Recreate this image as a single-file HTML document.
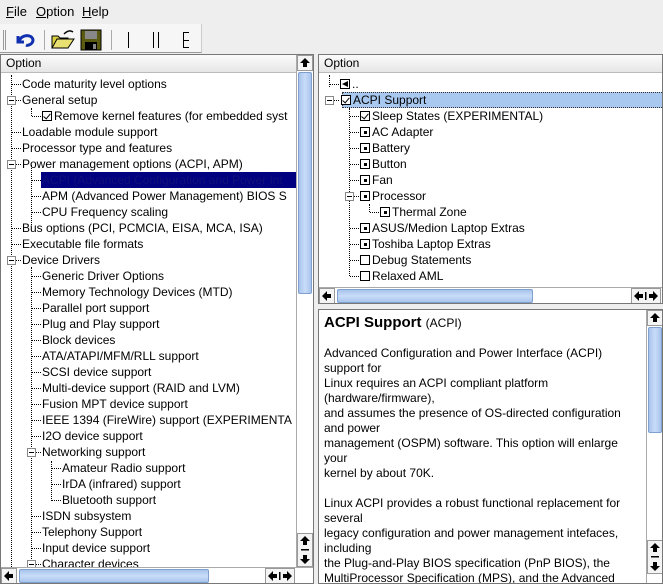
<!DOCTYPE html>
<html><head><meta charset="utf-8"><style>
*{box-sizing:border-box;margin:0;padding:0}
body{width:663px;height:584px;overflow:hidden;background:#eeeeee;font-family:"Liberation Sans",sans-serif;font-size:12px;color:#000;position:relative}
.abs{position:absolute}
.menu span{position:absolute;top:4px;font-size:13px}
.hdr{position:absolute;height:18px;background:linear-gradient(#fbfbfb,#e6e6e6);border-bottom:1px solid #bbb;padding-left:5px;line-height:17px;font-size:12px}
.row{position:absolute;height:16px;line-height:16px;white-space:nowrap}
.vl{position:absolute;border-left:1px dotted #000;width:0}
.hl{position:absolute;border-top:1px dotted #000;height:0}
.box{display:inline-block;width:10px;height:10px;border:1px solid #000;vertical-align:-1px;margin-right:2px;position:relative;background:#fff}
.ck::after{content:"";position:absolute;left:2px;top:0px;width:3px;height:6px;border:solid #000;border-width:0 1.5px 1.5px 0;transform:rotate(40deg)}
.dt::after{content:"";position:absolute;left:3px;top:3px;width:3px;height:3px;background:#000}
.pm{position:absolute;width:9px;height:9px;border:1px solid #888;background:#fff}
.pm::after{content:"";position:absolute;left:1px;top:3px;width:5px;height:1px;background:#000}
.sbv{position:absolute;width:17px;background:#fff;border-left:1px solid #aaa}
.thumb{position:absolute;left:1px;right:1px;background:linear-gradient(90deg,#a8c4ec,#c8dcf8 50%,#a8c4ec);border:1px solid #7f9fcf;border-radius:2px}
.btn{position:absolute;width:16px;height:16px;background:#f4f4f4;border:1px solid #999}
.btn svg{position:absolute;left:0;top:0}
.sbh{position:absolute;height:16px;background:#fff;border-top:1px solid #aaa}
</style></head><body>
<div class="menu">
<span style="left:6px"><u>F</u>ile</span><span style="left:36px"><u>O</u>ption</span><span style="left:82px"><u>H</u>elp</span>
</div>
<div class="abs" style="left:0;top:24px;width:202px;height:29px;background:#f6f6f6;border-bottom:1px solid #999;border-right:1px solid #ccc"></div>
<div class="abs" style="left:3px;top:30px;width:3px;height:20px;border-left:1px solid #999;border-right:1px solid #999"></div>
<svg class="abs" style="left:12px;top:30px" width="24" height="20"><path d="M6 6 L6 12 L12 12" fill="none" stroke="#1030b0" stroke-width="3"/><path d="M7 11 C10 4 20 4 21 10 C21 14 16 16 14 15" fill="none" stroke="#1030b0" stroke-width="3"/></svg>
<div class="abs" style="left:44px;top:30px;width:1px;height:20px;background:#aaa"></div>
<svg class="abs" style="left:50px;top:28px" width="26" height="22"><path d="M2 8 h6 l2 2 h8 v10 h-16z" fill="#d8d040" stroke="#000"/><path d="M2 20 l5-9 h17 l-6 9z" fill="#e8e070" stroke="#000"/><path d="M14 6 q5-5 9 -2" fill="none" stroke="#000" stroke-width="1.5"/></svg>
<svg class="abs" style="left:80px;top:29px" width="22" height="22"><rect x="1" y="1" width="20" height="20" fill="#5a5a10" stroke="#000"/><rect x="5" y="2" width="12" height="8" fill="#888"/><rect x="5" y="13" width="12" height="8" fill="#000"/><rect x="13" y="15" width="3" height="5" fill="#888"/></svg>
<div class="abs" style="left:111px;top:30px;width:1px;height:20px;background:#aaa"></div>
<div class="abs" style="left:128px;top:32px;width:1px;height:16px;background:#000"></div>
<div class="abs" style="left:153px;top:32px;width:1px;height:16px;background:#000"></div>
<div class="abs" style="left:158px;top:32px;width:1px;height:16px;background:#000"></div>
<div class="abs" style="left:183px;top:32px;width:1px;height:16px;background:#000"></div>
<div class="abs" style="left:184px;top:32px;width:5px;height:1px;background:#000"></div>
<div class="abs" style="left:184px;top:40px;width:5px;height:1px;background:#000"></div>
<div class="abs" style="left:184px;top:47px;width:5px;height:1px;background:#000"></div>

<!-- left panel -->
<div class="abs" style="left:0;top:54px;width:314px;height:530px;background:#fff;border:1px solid #777;overflow:hidden">
<div class="hdr" style="left:0;top:0;width:295px">Option</div>
<div style="position:absolute;left:0;top:0;width:295px;height:512px;overflow:hidden">
<div class="vl" style="left:10px;top:20px;height:500px"></div>
<div class="vl" style="left:30px;top:110px;height:60px"></div>
<div class="vl" style="left:30px;top:212px;height:300px"></div>
<div class="vl" style="left:50px;top:406px;height:40px"></div>
<div class="row" style="background:#000080;top:117px;left:40px;width:256px"></div>
<div class="hl" style="left:11px;top:29px;width:9px"></div><div class="row" style="left:21px;top:21px">Code maturity level options</div>
<div class="pm" style="left:6px;top:41px"></div><div class="hl" style="left:15px;top:45px;width:5px"></div><div class="row" style="left:21px;top:37px">General setup</div>
<div class="vl" style="left:30px;top:53px;height:8px"></div><div class="hl" style="left:31px;top:61px;width:9px"></div><div class="row" style="left:41px;top:53px"><span class="box ck"></span>Remove kernel features (for embedded syst</div>
<div class="hl" style="left:11px;top:77px;width:9px"></div><div class="row" style="left:21px;top:69px">Loadable module support</div>
<div class="hl" style="left:11px;top:93px;width:9px"></div><div class="row" style="left:21px;top:85px">Processor type and features</div>
<div class="pm" style="left:6px;top:105px"></div><div class="hl" style="left:15px;top:109px;width:5px"></div><div class="row" style="left:21px;top:101px">Power management options (ACPI, APM)</div>
<div class="hl" style="left:31px;top:125px;width:9px"></div><div class="row" style="left:41px;top:117px;color:#101078">ACPI (Advanced Configuration and Power Int</div>
<div class="hl" style="left:31px;top:141px;width:9px"></div><div class="row" style="left:41px;top:133px">APM (Advanced Power Management) BIOS S</div>
<div class="hl" style="left:31px;top:157px;width:9px"></div><div class="row" style="left:41px;top:149px">CPU Frequency scaling</div>
<div class="hl" style="left:11px;top:173px;width:9px"></div><div class="row" style="left:21px;top:165px">Bus options (PCI, PCMCIA, EISA, MCA, ISA)</div>
<div class="hl" style="left:11px;top:189px;width:9px"></div><div class="row" style="left:21px;top:181px">Executable file formats</div>
<div class="pm" style="left:6px;top:201px"></div><div class="hl" style="left:15px;top:205px;width:5px"></div><div class="row" style="left:21px;top:197px">Device Drivers</div>
<div class="hl" style="left:31px;top:221px;width:9px"></div><div class="row" style="left:41px;top:213px">Generic Driver Options</div>
<div class="hl" style="left:31px;top:237px;width:9px"></div><div class="row" style="left:41px;top:229px">Memory Technology Devices (MTD)</div>
<div class="hl" style="left:31px;top:253px;width:9px"></div><div class="row" style="left:41px;top:245px">Parallel port support</div>
<div class="hl" style="left:31px;top:269px;width:9px"></div><div class="row" style="left:41px;top:261px">Plug and Play support</div>
<div class="hl" style="left:31px;top:285px;width:9px"></div><div class="row" style="left:41px;top:277px">Block devices</div>
<div class="hl" style="left:31px;top:301px;width:9px"></div><div class="row" style="left:41px;top:293px">ATA/ATAPI/MFM/RLL support</div>
<div class="hl" style="left:31px;top:317px;width:9px"></div><div class="row" style="left:41px;top:309px">SCSI device support</div>
<div class="hl" style="left:31px;top:333px;width:9px"></div><div class="row" style="left:41px;top:325px">Multi-device support (RAID and LVM)</div>
<div class="hl" style="left:31px;top:349px;width:9px"></div><div class="row" style="left:41px;top:341px">Fusion MPT device support</div>
<div class="hl" style="left:31px;top:365px;width:9px"></div><div class="row" style="left:41px;top:357px">IEEE 1394 (FireWire) support (EXPERIMENTA</div>
<div class="hl" style="left:31px;top:381px;width:9px"></div><div class="row" style="left:41px;top:373px">I2O device support</div>
<div class="pm" style="left:26px;top:393px"></div><div class="hl" style="left:35px;top:397px;width:5px"></div><div class="row" style="left:41px;top:389px">Networking support</div>
<div class="hl" style="left:51px;top:413px;width:9px"></div><div class="row" style="left:61px;top:405px">Amateur Radio support</div>
<div class="hl" style="left:51px;top:429px;width:9px"></div><div class="row" style="left:61px;top:421px">IrDA (infrared) support</div>
<div class="hl" style="left:51px;top:445px;width:9px"></div><div class="row" style="left:61px;top:437px">Bluetooth support</div>
<div class="hl" style="left:31px;top:461px;width:9px"></div><div class="row" style="left:41px;top:453px">ISDN subsystem</div>
<div class="hl" style="left:31px;top:477px;width:9px"></div><div class="row" style="left:41px;top:469px">Telephony Support</div>
<div class="hl" style="left:31px;top:493px;width:9px"></div><div class="row" style="left:41px;top:485px">Input device support</div>
<div class="pm" style="left:26px;top:505px"></div><div class="hl" style="left:35px;top:509px;width:5px"></div><div class="row" style="left:41px;top:501px">Character devices</div>
</div>
<div class="sbv" style="left:295px;top:0;height:512px">
<div class="btn" style="left:0;top:0"><svg width="14" height="14"><path d="M7 2 L12 7 H9 V11 H5 V7 H2z" fill="#000"/></svg></div>
<div class="thumb" style="top:17px;height:222px"></div>
<div class="btn" style="left:0;top:478px;height:34px"><svg width="14" height="32"><path d="M7 2 L12 7 H9 V11 H5 V7 H2z" fill="#000"/><rect x="3" y="15" width="8" height="1.5" fill="#000"/><path d="M7 30 L12 25 H9 V21 H5 V25 H2z" fill="#000"/></svg></div>
</div>
<div class="sbh" style="left:0;top:512px;width:312px">
<div class="btn" style="left:0;top:0"><svg width="14" height="14"><path d="M2 7 L7 2 V5 H11 V9 H7 V12z" fill="#000"/></svg></div>
<div class="thumb" style="left:18px;top:1px;height:14px;width:190px;right:auto;background:linear-gradient(#a8c4ec,#c8dcf8 50%,#a8c4ec)"></div>
<div class="btn" style="left:264px;top:0;width:30px"><svg width="28" height="14"><path d="M2 7 L7 2 V5 H11 V9 H7 V12z" fill="#000"/><rect x="13" y="3" width="1.5" height="8" fill="#000"/><path d="M26 7 L21 2 V5 H17 V9 H21 V12z" fill="#000"/></svg></div>
</div>
</div>

<!-- right top panel -->
<div class="abs" style="left:318px;top:54px;width:345px;height:250px;background:#fff;border:1px solid #777;overflow:hidden">
<div class="hdr" style="left:0;top:0;width:345px">Option</div>
<div class="vl" style="left:10px;top:20px;height:12px"></div><div class="hl" style="left:11px;top:29px;width:9px"></div>
<div class="row" style="left:21px;top:21px"><span class="box" style="background:#fff"><span style="position:absolute;left:1px;top:1px;border-right:6px solid #000;border-top:3px solid transparent;border-bottom:3px solid transparent"></span></span>..</div>
<div class="row" style="left:23px;top:37px;width:322px;background:#a8c8f0;border:1px dotted #333"></div>
<div class="pm" style="left:6px;top:41px"></div><div class="hl" style="left:15px;top:45px;width:5px"></div>
<div class="row" style="left:22px;top:37px"><span class="box ck"></span>ACPI Support</div>
<div class="vl" style="left:30px;top:53px;height:168px"></div>
<div class="vl" style="left:50px;top:149px;height:8px"></div>
<div class="hl" style="left:31px;top:61px;width:9px"></div><div class="row" style="left:41px;top:53px"><span class="box ck"></span>Sleep States (EXPERIMENTAL)</div>
<div class="hl" style="left:31px;top:77px;width:9px"></div><div class="row" style="left:41px;top:69px"><span class="box dt"></span>AC Adapter</div>
<div class="hl" style="left:31px;top:93px;width:9px"></div><div class="row" style="left:41px;top:85px"><span class="box dt"></span>Battery</div>
<div class="hl" style="left:31px;top:109px;width:9px"></div><div class="row" style="left:41px;top:101px"><span class="box dt"></span>Button</div>
<div class="hl" style="left:31px;top:125px;width:9px"></div><div class="row" style="left:41px;top:117px"><span class="box dt"></span>Fan</div>
<div class="pm" style="left:26px;top:137px"></div><div class="hl" style="left:35px;top:141px;width:5px"></div><div class="row" style="left:41px;top:133px"><span class="box dt"></span>Processor</div>
<div class="hl" style="left:51px;top:157px;width:9px"></div><div class="row" style="left:61px;top:149px"><span class="box dt"></span>Thermal Zone</div>
<div class="hl" style="left:31px;top:173px;width:9px"></div><div class="row" style="left:41px;top:165px"><span class="box dt"></span>ASUS/Medion Laptop Extras</div>
<div class="hl" style="left:31px;top:189px;width:9px"></div><div class="row" style="left:41px;top:181px"><span class="box dt"></span>Toshiba Laptop Extras</div>
<div class="hl" style="left:31px;top:205px;width:9px"></div><div class="row" style="left:41px;top:197px"><span class="box"></span>Debug Statements</div>
<div class="hl" style="left:31px;top:221px;width:9px"></div><div class="row" style="left:41px;top:213px"><span class="box"></span>Relaxed AML</div>
<div class="sbh" style="left:0;top:232px;width:345px">
<div class="btn" style="left:0;top:0"><svg width="14" height="14"><path d="M2 7 L7 2 V5 H11 V9 H7 V12z" fill="#000"/></svg></div>
<div class="thumb" style="left:18px;top:1px;height:14px;width:196px;right:auto;background:linear-gradient(#a8c4ec,#c8dcf8 50%,#a8c4ec)"></div>
<div class="btn" style="left:312px;top:0;width:30px"><svg width="28" height="14"><path d="M2 7 L7 2 V5 H11 V9 H7 V12z" fill="#000"/><rect x="13" y="3" width="1.5" height="8" fill="#000"/><path d="M26 7 L21 2 V5 H17 V9 H21 V12z" fill="#000"/></svg></div>
</div>
</div>

<!-- right bottom panel -->
<div class="abs" style="left:318px;top:309px;width:345px;height:275px;background:#fff;border:1px solid #777;overflow:hidden">
<div style="position:absolute;left:5px;top:4px;width:320px;line-height:15px;font-size:12px">
<div style="font-size:15px;line-height:18px"><b>ACPI Support</b> <span style="font-size:12px">(ACPI)</span></div>
<div style="height:14px"></div>
Advanced Configuration and Power Interface (ACPI)<br>support for<br>Linux requires an ACPI compliant platform<br>(hardware/firmware),<br>and assumes the presence of OS-directed configuration<br>and power<br>management (OSPM) software. This option will enlarge<br>your<br>kernel by about 70K.<br><br>Linux ACPI provides a robust functional replacement for<br>several<br>legacy configuration and power management intefaces,<br>including<br>the Plug-and-Play BIOS specification (PnP BIOS), the<br>MultiProcessor Specification (MPS), and the Advanced
</div>
<div class="sbv" style="left:327px;top:0;height:275px">
<div class="btn" style="left:0;top:0"><svg width="14" height="14"><path d="M7 2 L12 7 H9 V11 H5 V7 H2z" fill="#000"/></svg></div>
<div class="thumb" style="top:17px;height:106px"></div>
<div class="btn" style="left:0;top:230px;height:34px"><svg width="14" height="32"><path d="M7 2 L12 7 H9 V11 H5 V7 H2z" fill="#000"/><rect x="3" y="15" width="8" height="1.5" fill="#000"/><path d="M7 30 L12 25 H9 V21 H5 V25 H2z" fill="#000"/></svg></div>
</div>
</div>
</body></html>
